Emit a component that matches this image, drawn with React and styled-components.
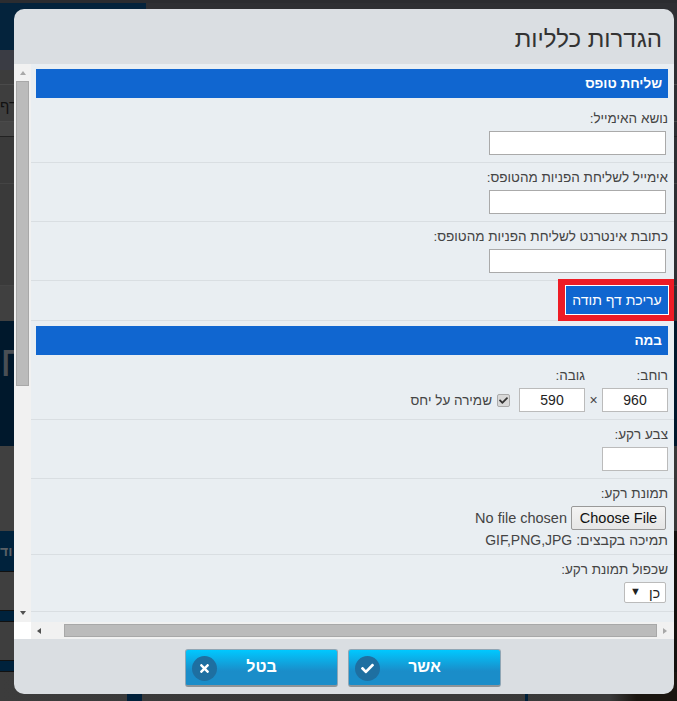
import React from 'react';
import styled, { createGlobalStyle } from 'styled-components';
import { FaCheck, FaTimes } from 'react-icons/fa';

const GlobalStyle = createGlobalStyle`
  html, body {
    margin: 0;
    padding: 0;
    height: 100%;
    overflow: hidden;
    background: #333;
  }

  body, input, button {
    font-family: 'Liberation Sans', Arial, sans-serif;
  }
`;

const Page = styled.div`
  position: relative;
  width: 677px;
  height: 701px;
  overflow: hidden;
`;

/* the page behind the dialog, only its edges stay visible */
const Backdrop = styled.div`
  display: flex;
  flex-direction: column;
  height: 100%;
`;

const Band = styled.div`
  display: flex;
  align-items: center;
  flex: none;
  height: ${(p) => p.$h}px;
  padding: ${(p) => p.$pad || '0'};
  background: linear-gradient(
    to right,
    ${(p) => p.$left} ${(p) => p.$split || 338}px,
    ${(p) => p.$right || p.$left} ${(p) => p.$split || 338}px
  );
  border-bottom: ${(p) => (p.$line ? `1px solid ${p.$line}` : 'none')};
  box-sizing: border-box;
`;

const PeekText = styled.div`
  width: 14px;
  overflow: hidden;
  direction: ltr;
  white-space: nowrap;
  color: ${(p) => p.$color};
  font-size: ${(p) => p.$size}px;
  font-weight: ${(p) => (p.$bold ? 'bold' : 'normal')};
`;

const BottomBand = styled.div`
  display: flex;
  flex: 1;
  background: linear-gradient(to right, #3c3c3c, #383838 40%, #3a3a3a 90%, #1a1510 94%);
`;

const BottomBlock = styled.div`
  flex: none;
  width: ${(p) => p.$w}px;
  margin-left: ${(p) => p.$offset}px;
  background: #00203a;
`;

const Dialog = styled.div`
  position: absolute;
  top: 9px;
  left: 14px;
  display: flex;
  flex-direction: column;
  width: 660px;
  height: 685px;
  overflow: hidden;
  border-radius: 10px;
  background: #dadee2;
  direction: rtl;
  color: #444;
  font-size: 13.5px;
`;

const Header = styled.div`
  display: flex;
  align-items: center;
  flex: none;
  height: 55px;
  padding: 4px 12px 0;
  box-sizing: border-box;
`;

const Title = styled.h2`
  margin: 0;
  color: #333;
  font-size: 24px;
  font-weight: normal;
`;

const Middle = styled.div`
  display: flex;
  flex: 1;
  min-height: 0;
  direction: ltr;
`;

const VerticalTrack = styled.div`
  display: flex;
  flex-direction: column;
  align-items: center;
  flex: none;
  width: 17px;
  background: #f1f1f1;
`;

const VerticalThumb = styled.div`
  flex: none;
  width: 11px;
  height: 303px;
  margin-top: 6px;
  border: 1px solid #a8a8a8;
  background: #bbb;
`;

const ArrowUp = styled.div`
  flex: none;
  margin-top: 7px;
  border-left: 3.5px solid transparent;
  border-right: 3.5px solid transparent;
  border-bottom: 4px solid ${(p) => p.$color};
`;

const ArrowDown = styled.div`
  flex: none;
  margin-top: auto;
  margin-bottom: 7px;
  border-left: 3.5px solid transparent;
  border-right: 3.5px solid transparent;
  border-top: 4px solid ${(p) => p.$color};
`;

const Content = styled.div`
  flex: 1;
  min-width: 0;
  overflow: hidden;
  background: #e9eef2;
  direction: rtl;
`;

const SectionHead = styled.div`
  display: flex;
  align-items: center;
  height: 28px;
  margin: 5px 6px 6px 5px;
  padding: 0 6px 1px;
  background: #1066d0;
  color: #fff;
  font-size: 13.5px;
  font-weight: bold;
`;

const Row = styled.div`
  padding: 6px 6px ${(p) => p.$pb ?? 7}px;
  border-bottom: 1px solid #d9dee2;
`;

const ButtonRow = styled.div`
  display: flex;
  padding: 5px 6px 6px;
  border-bottom: 1px solid #d9dee2;
`;

const Label = styled.div`
  height: 21px;
  line-height: 17px;
  color: #444;
`;

const TextField = styled.input`
  display: block;
  width: ${(p) => p.$w}px;
  height: 24px;
  margin-right: ${(p) => p.$inset || 0}px;
  padding: 0 4px;
  box-sizing: border-box;
  border: 1px solid ${(p) => p.$border || '#aaa'};
  border-radius: 0;
  background: #fff;
  outline: none;
  color: #222;
  font-size: 14px;
  text-align: center;
`;

const EditButton = styled.button`
  width: 102px;
  height: 28px;
  padding: 0;
  border: 0;
  background: #1066d0;
  box-shadow: 0 0 0 1px #fff, -1px 0 0 7px #ee1c25;
  color: #fff;
  font-size: 14px;
`;

const SizeLine = styled.div`
  display: flex;
  align-items: flex-end;
`;

const SizeField = styled.div`
  display: flex;
  flex-direction: column;
`;

const Times = styled.span`
  flex: none;
  width: 17px;
  height: 24px;
  line-height: 24px;
  text-align: center;
  color: #444;
  font-size: 14px;
`;

const KeepRatio = styled.label`
  display: flex;
  align-items: center;
  gap: 5px;
  height: 24px;
  margin-right: 9px;
`;

const CheckBox = styled.span`
  display: flex;
  align-items: center;
  justify-content: center;
  flex: none;
  width: 11px;
  height: 11px;
  border: 1px solid #aaa;
  border-radius: 2px;
  background: #d8d8d8;
  color: #333;
  font-size: 9px;
`;

const FileLine = styled.div`
  display: flex;
  align-items: center;
  gap: 4px;
  margin-right: 2px;
`;

const ChooseButton = styled.button`
  flex: none;
  width: 95px;
  height: 24px;
  padding: 0;
  border: 1px solid #999;
  border-radius: 2px;
  background: linear-gradient(#f3f3f3, #e6e6e6);
  color: #111;
  font-size: 14.5px;
`;

const NoFile = styled.span`
  color: #444;
  font-size: 14.5px;
`;

const Hint = styled.div`
  height: 21px;
  line-height: 21px;
  color: #444;
  font-size: 14px;
`;

const Dropdown = styled.div`
  display: flex;
  align-items: center;
  justify-content: space-between;
  width: 42px;
  height: 21px;
  margin-right: 2px;
  padding: 0 5px 0 5px;
  box-sizing: border-box;
  border: 1px solid #bbb;
  border-radius: 2px;
  background: #fff;
  color: #222;
  font-size: 14px;
`;

const DropGlyph = styled.span`
  margin-top: -4px;
  color: #222;
  font-size: 11px;
`;

const HorizontalBar = styled.div`
  display: flex;
  flex: none;
  height: 17px;
  direction: ltr;
`;

const Corner = styled.div`
  flex: none;
  width: 17px;
  background: #fff;
`;

const HorizontalTrack = styled.div`
  display: flex;
  align-items: center;
  flex: 1;
  background: #f1f1f1;
`;

const ArrowLeft = styled.div`
  flex: none;
  margin-left: 6px;
  border-top: 3.5px solid transparent;
  border-bottom: 3.5px solid transparent;
  border-right: 4px solid #505050;
`;

const ArrowRight = styled.div`
  flex: none;
  margin-left: 6px;
  border-top: 3.5px solid transparent;
  border-bottom: 3.5px solid transparent;
  border-left: 4px solid #a8a8a8;
`;

const HorizontalThumb = styled.div`
  flex: none;
  width: 591px;
  height: 11px;
  margin-left: 23px;
  border: 1px solid #a8a8a8;
  background: #bbb;
`;

const Footer = styled.div`
  display: flex;
  justify-content: center;
  gap: 10px;
  flex: none;
  height: 55px;
  padding: 10px 2px 0 0;
  box-sizing: border-box;
`;

const ActionButton = styled.button`
  position: relative;
  width: 153px;
  height: 38px;
  padding: 0 0 2px;
  border: 1px solid #8fa6b5;
  border-bottom: 2px solid #8c9499;
  border-radius: 3px;
  background: linear-gradient(#00c8ff, #1a8dc9 60%, #1a8dc9);
  color: #fff;
  font-size: 16px;
  font-weight: bold;
`;

const ActionIcon = styled.span`
  position: absolute;
  top: 6px;
  left: 6px;
  display: flex;
  align-items: center;
  justify-content: center;
  width: 25px;
  height: 25px;
  border-radius: 50%;
  background: #1e6fa1;
  font-size: 13px;
`;

const App = () => (
  <Page>
    <GlobalStyle />
    <Backdrop>
      <Band $h={3} $left="#2b2c30" />
      <Band $h={47} $left="#04233c" $right="#2e2f33" $split={146} />
      <Band $h={20} $left="#3a3c44" $right="#2e2f33" />
      <Band $h={15} $left="#3c3c3c" $right="#2e2f33" $line="#4a4a4a" />
      <Band $h={37} $left="#3e3e3e" $right="#2e2f33" $line="#4a4a4a" $pad="5px 0 0">
        <PeekText $color="#111" $size={15}>דף</PeekText>
      </Band>
      <Band $h={15} $left="#454545" $right="#2e2f33" $line="#222" />
      <Band $h={47} $left="#3a3a3a" $right="#2e2f33" $line="#444" />
      <Band $h={102} $left="#3a3a3a" $right="#2e2f33" $line="#444" />
      <Band $h={35} $left="#404040" $right="#2e2f33" />
      <Band $h={125} $left="#00182c" $right="#00182c" $pad="0 0 45px">
        <PeekText $color="#4a4f55" $size={44}>ח</PeekText>
      </Band>
      <Band $h={85} $left="#404040" $right="#383838" />
      <Band $h={41} $left="#00223c" $right="#14110e" $line="#111">
        <PeekText $color="#5a6066" $size={14} $bold>וד</PeekText>
      </Band>
      <Band $h={39} $left="#3f3f3f" $right="#14110e" $line="#111" />
      <Band $h={11} $left="#00223c" $right="#14110e" $line="#111" />
      <Band $h={39} $left="#3e3e3e" $right="#14110e" $line="#111" />
      <Band $h={11} $left="#00223c" $right="#14110e" $line="#111" />
      <BottomBand>
        <BottomBlock $w={15} $offset={127} />
        <BottomBlock $w={3} $offset={383} />
      </BottomBand>
    </Backdrop>

    <Dialog>
      <Header>
        <Title>הגדרות כלליות</Title>
      </Header>

      <Middle>
        <VerticalTrack>
          <ArrowUp $color="#a8a8a8" />
          <VerticalThumb />
          <ArrowDown $color="#505050" />
        </VerticalTrack>

        <Content>
          <SectionHead>שליחת טופס</SectionHead>
          <Row>
            <Label>נושא האימייל:</Label>
            <TextField $w={177} $inset={2} />
          </Row>
          <Row>
            <Label>אימייל לשליחת הפניות מהטופס:</Label>
            <TextField $w={177} $inset={2} />
          </Row>
          <Row>
            <Label>כתובת אינטרנט לשליחת הפניות מהטופס:</Label>
            <TextField $w={177} $inset={2} />
          </Row>
          <ButtonRow>
            <EditButton>עריכת דף תודה</EditButton>
          </ButtonRow>

          <SectionHead>במה</SectionHead>
          <Row>
            <SizeLine>
              <SizeField>
                <Label>רוחב:</Label>
                <TextField $w={66} $border="#bbb" defaultValue="960" />
              </SizeField>
              <Times>×</Times>
              <SizeField>
                <Label>גובה:</Label>
                <TextField $w={66} $border="#bbb" defaultValue="590" />
              </SizeField>
              <KeepRatio>
                <CheckBox>
                  <FaCheck />
                </CheckBox>
                שמירה על יחס
              </KeepRatio>
            </SizeLine>
          </Row>
          <Row>
            <Label>צבע רקע:</Label>
            <TextField $w={66} $border="#bbb" />
          </Row>
          <Row $pb={3}>
            <Label>תמונת רקע:</Label>
            <FileLine>
              <ChooseButton>Choose File</ChooseButton>
              <NoFile>No file chosen</NoFile>
            </FileLine>
            <Hint>תמיכה בקבצים: GIF,PNG,JPG</Hint>
          </Row>
          <Row $pb={8}>
            <Label>שכפול תמונת רקע:</Label>
            <Dropdown>
              כן
              <DropGlyph>▼</DropGlyph>
            </Dropdown>
          </Row>
        </Content>
      </Middle>

      <HorizontalBar>
        <Corner />
        <HorizontalTrack>
          <ArrowLeft />
          <HorizontalThumb />
          <ArrowRight />
        </HorizontalTrack>
      </HorizontalBar>

      <Footer>
        <ActionButton>
          <ActionIcon>
            <FaCheck />
          </ActionIcon>
          אשר
        </ActionButton>
        <ActionButton>
          <ActionIcon>
            <FaTimes />
          </ActionIcon>
          בטל
        </ActionButton>
      </Footer>
    </Dialog>
  </Page>
);

export default App;
